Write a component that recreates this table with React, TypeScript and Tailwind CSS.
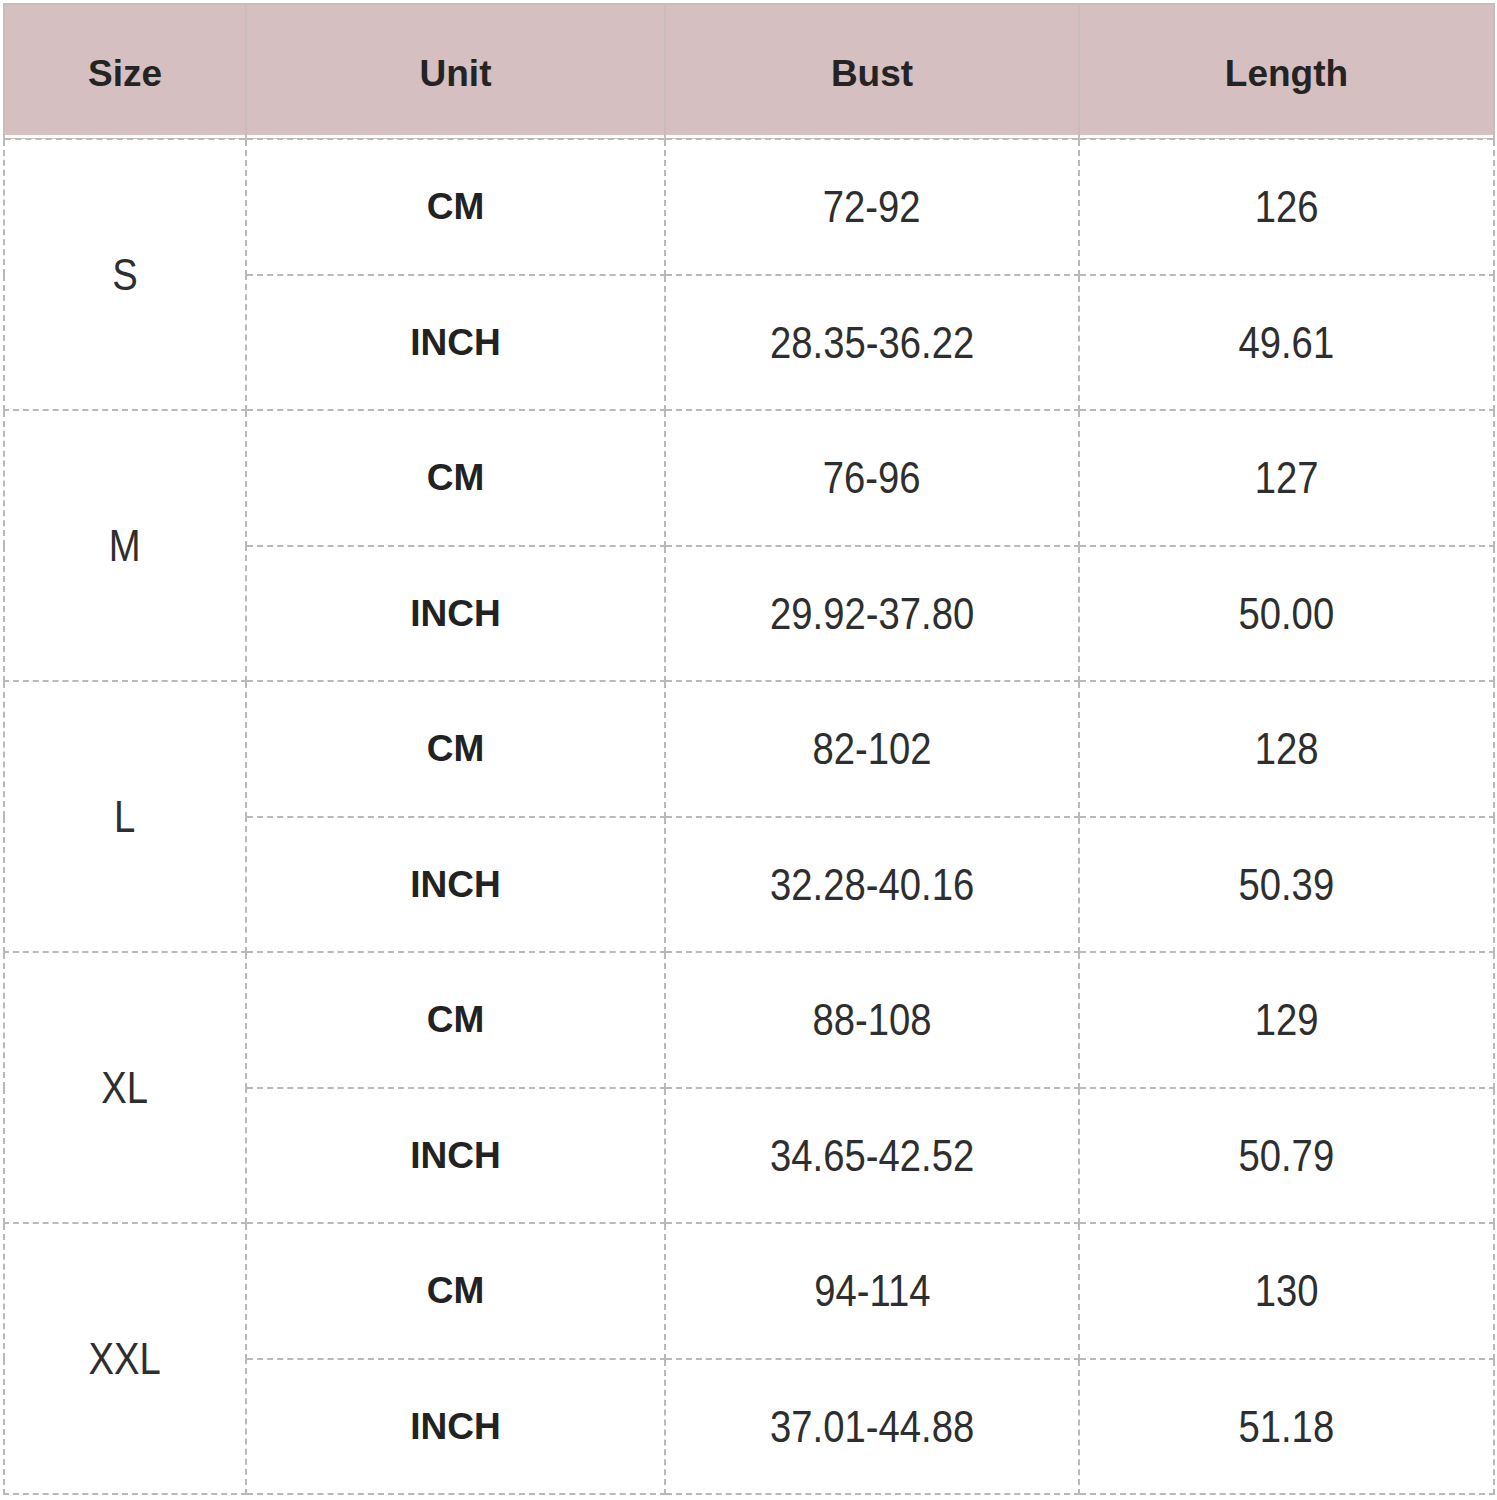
import React from 'react';

interface SizeRow {
  size: string;
  cm: [string, string];
  inch: [string, string];
}

const rows: SizeRow[] = [
  { size: 'S', cm: ['72-92', '126'], inch: ['28.35-36.22', '49.61'] },
  { size: 'M', cm: ['76-96', '127'], inch: ['29.92-37.80', '50.00'] },
  { size: 'L', cm: ['82-102', '128'], inch: ['32.28-40.16', '50.39'] },
  { size: 'XL', cm: ['88-108', '129'], inch: ['34.65-42.52', '50.79'] },
  { size: 'XXL', cm: ['94-114', '130'], inch: ['37.01-44.88', '51.18'] },
];

const headers = ['Size', 'Unit', 'Bust', 'Length'];

function Narrow({ children }: { children: React.ReactNode }) {
  return <span className="inline-block scale-x-[0.85] text-[45px] leading-none text-[#2e2e2e]">{children}</span>;
}

const cell = 'border-2 border-dashed border-[#b9b9b9] text-center align-middle p-0';

export default function App() {
  return (
    <div className="w-[1497px] h-[1500px] bg-white pl-[3px] pt-[3px]" style={{ fontFamily: '"Liberation Sans", Arial, sans-serif' }}>
      <table className="w-[1490px] table-fixed border-collapse">
        <colgroup>
          <col className="w-[242px]" />
          <col className="w-[419px]" />
          <col className="w-[414px]" />
          <col className="w-[415px]" />
        </colgroup>
        <thead>
          <tr className="h-[135px]">
            {headers.map((h) => (
              <th
                key={h}
                className="border-2 border-solid border-[#cbbcbc] [border-bottom-style:dashed] border-b-[#b9b9b9] bg-[#d6bfc0] shadow-[inset_0_-3px_0_#ffffff] text-center align-middle text-[37px] font-bold text-[#242424] p-0 pt-[5px]"
              >
                {h}
              </th>
            ))}
          </tr>
        </thead>
        <tbody>
          {rows.map((r) => (
            <React.Fragment key={r.size}>
              <tr className="h-[135.5px]">
                <td rowSpan={2} className={cell}>
                  <Narrow>{r.size}</Narrow>
                </td>
                <td className={`${cell} text-[37px] font-bold text-[#222]`}>CM</td>
                <td className={cell}>
                  <Narrow>{r.cm[0]}</Narrow>
                </td>
                <td className={cell}>
                  <Narrow>{r.cm[1]}</Narrow>
                </td>
              </tr>
              <tr className="h-[135.5px]">
                <td className={`${cell} text-[37px] font-bold text-[#222]`}>INCH</td>
                <td className={cell}>
                  <Narrow>{r.inch[0]}</Narrow>
                </td>
                <td className={cell}>
                  <Narrow>{r.inch[1]}</Narrow>
                </td>
              </tr>
            </React.Fragment>
          ))}
        </tbody>
      </table>
    </div>
  );
}
